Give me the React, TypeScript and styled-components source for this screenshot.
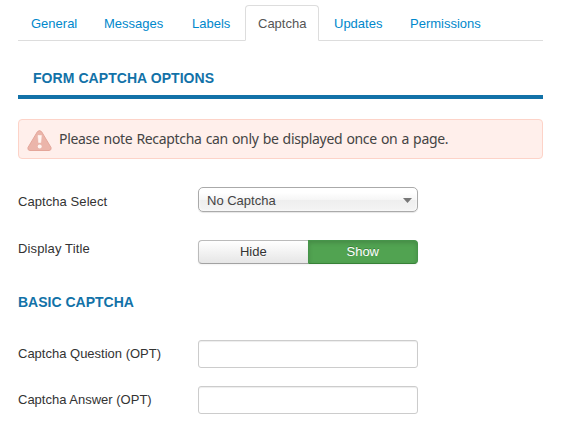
import React, { useState } from 'react';
import styled, { createGlobalStyle } from 'styled-components';

const GlobalStyle = createGlobalStyle`
  * { box-sizing: border-box; }
  body {
    margin: 0;
    background: #fff;
    color: #333;
    font: 13px/18px "Liberation Sans", Arial, sans-serif;
  }
`;

const Page = styled.main`
  width: 561px;
  height: 430px;
  padding: 5px 18px 0;
  overflow: hidden;
`;

const Tabs = styled.nav`
  display: flex;
  gap: 2px;
  height: 36px;
  border-bottom: 1px solid #ddd;
`;

const Tab = styled.a<{ $active?: boolean; $width: number }>`
  flex: none;
  width: ${p => p.$width}px;
  height: 36px;
  padding: 9px 0 8px 12px;
  border: 1px solid;
  border-color: ${p => (p.$active ? '#ddd #ddd #fff' : 'transparent')};
  border-radius: 4px 4px 0 0;
  background: ${p => (p.$active ? '#fff' : 'transparent')};
  color: ${p => (p.$active ? '#555' : '#0088cc')};
  text-decoration: none;
  white-space: nowrap;
`;

const Panel = styled.section`
  width: 525px;
`;

const PanelTitle = styled.h2`
  height: 58px;
  margin: 0;
  padding: 28px 15px 0;
  border-bottom: 4px solid #1272a8;
  color: #1272a8;
  font-size: 14px;
  line-height: 18px;
  font-weight: bold;
  letter-spacing: 0.06px;
`;

const Alert = styled.div`
  display: flex;
  align-items: center;
  height: 40px;
  margin-top: 20px;
  padding: 0 8px;
  gap: 7px;
  border: 1px solid #fdd3c8;
  border-radius: 4px;
  background: #ffefeb;
  color: #444;
  font: 14px/20px "Noto Sans", sans-serif;
  white-space: nowrap;
`;

const AlertIcon = styled.svg`
  flex: none;
  margin-top: 3px;
`;

const AlertText = styled.span`
  letter-spacing: -0.33px;
  word-spacing: 0.8px;
`;

const Field = styled.div<{ $top: number; $height: number }>`
  display: grid;
  grid-template-columns: 180px 220px;
  height: ${p => p.$height}px;
  margin-top: ${p => p.$top}px;
`;

const Label = styled.label<{ $offset: number; $spacing?: number }>`
  padding-top: ${p => p.$offset}px;
  letter-spacing: ${p => p.$spacing ?? 0}px;
`;

const Select = styled.button`
  display: flex;
  align-items: center;
  justify-content: space-between;
  width: 220px;
  height: 25px;
  padding: 2px 5px 0 8px;
  border: 1px solid #aaa;
  border-radius: 5px;
  background: linear-gradient(#fff 20%, #f6f6f6 50%, #eee 52%, #f4f4f4 100%);
  box-shadow: inset 0 0 3px #fff, 0 1px 1px rgba(0, 0, 0, 0.1);
  color: #444;
  font: inherit;
`;

const SelectArrow = styled.svg`
  flex: none;
  margin-bottom: 1px;
`;

const ButtonGroup = styled.div`
  display: flex;
  width: 220px;
  height: 24px;
`;

const Choice = styled.button<{ $on: boolean }>`
  flex: 1;
  padding: 0;
  border: 1px solid;
  border-color: ${p => (p.$on ? '#46944a #46944a #378137' : '#bbb #bbb #a2a2a2')};
  background: ${p => (p.$on ? '#51a351' : 'linear-gradient(#fff, #e6e6e6)')};
  box-shadow: ${p =>
    p.$on
      ? 'inset 0 2px 4px rgba(0,0,0,.15), 0 1px 2px rgba(0,0,0,.05)'
      : 'inset 0 1px 0 rgba(255,255,255,.2), 0 1px 2px rgba(0,0,0,.05)'};
  color: ${p => (p.$on ? '#fff' : '#333')};
  text-shadow: ${p => (p.$on ? '0 -1px 0 rgba(0,0,0,.25)' : '0 1px 1px rgba(255,255,255,.75)')};
  font: inherit;
  line-height: 22px;
  &:first-child { border-radius: 4px 0 0 4px; border-right-width: 0; }
  &:last-child { border-radius: 0 4px 4px 0; }
`;

const SectionTitle = styled.h3`
  margin: 29px 0 0;
  color: #1272a8;
  font-size: 14px;
  line-height: 18px;
`;

const Input = styled.input`
  width: 220px;
  height: 28px;
  padding: 4px 6px;
  border: 1px solid #ccc;
  border-radius: 3px;
  background: #fff;
  box-shadow: inset 0 1px 1px rgba(0, 0, 0, 0.075);
  font: inherit;
  outline: none;
`;

const tabs = [
  { name: 'General', width: 71 },
  { name: 'Messages', width: 86 },
  { name: 'Labels', width: 64 },
  { name: 'Captcha', width: 74 },
  { name: 'Updates', width: 74 },
  { name: 'Permissions', width: 98 },
];

export default function App() {
  const [tab, setTab] = useState('Captcha');
  const [title, setTitle] = useState('Show');
  return (
    <>
      <GlobalStyle />
      <Page>
        <Tabs>
          {tabs.map(t => (
            <Tab
              key={t.name}
              href="#"
              $width={t.width}
              $active={t.name === tab}
              onClick={e => { e.preventDefault(); setTab(t.name); }}
            >
              {t.name}
            </Tab>
          ))}
        </Tabs>
        <Panel>
          <PanelTitle>FORM CAPTCHA OPTIONS</PanelTitle>
          <Alert role="alert">
            <AlertIcon width="25" height="21" viewBox="0 0 25 21" aria-hidden="true">
              <path
                d="M10.4 1.7Q12.5-.5 14.6 1.7L24 17.5Q24.7 20.4 22 20.5H3Q.3 20.4 1 17.5Z"
                fill="#ebb5aa"
                stroke="#e4a69a"
              />
              <path d="M11 5.5h3.4l-.6 7h-2.2z" fill="#fff5f2" stroke="#fff5f2" strokeWidth=".6" strokeLinejoin="round" />
              <circle cx="12.7" cy="16.5" r="2" fill="#fff5f2" />
            </AlertIcon>
            <AlertText>Please note Recaptcha can only be displayed once on a page.</AlertText>
          </Alert>
          <Field $top={28} $height={25}>
            <Label $offset={6} $spacing={0.07}>Captcha Select</Label>
            <Select type="button">
              No Captcha
              <SelectArrow width="9" height="5" viewBox="0 0 9 5" aria-hidden="true">
                <path d="M0 0h9L4.5 5z" fill="#777" />
              </SelectArrow>
            </Select>
          </Field>
          <Field $top={28} $height={24}>
            <Label $offset={0} $spacing={0.14}>Display Title</Label>
            <ButtonGroup>
              {['Hide', 'Show'].map(v => (
                <Choice key={v} type="button" $on={v === title} onClick={() => setTitle(v)}>
                  {v}
                </Choice>
              ))}
            </ButtonGroup>
          </Field>
          <SectionTitle>BASIC CAPTCHA</SectionTitle>
          <Field $top={29} $height={28}>
            <Label htmlFor="question" $offset={5}>Captcha Question (OPT)</Label>
            <Input id="question" />
          </Field>
          <Field $top={18} $height={28}>
            <Label htmlFor="answer" $offset={5}>Captcha Answer (OPT)</Label>
            <Input id="answer" />
          </Field>
        </Panel>
      </Page>
    </>
  );
}
